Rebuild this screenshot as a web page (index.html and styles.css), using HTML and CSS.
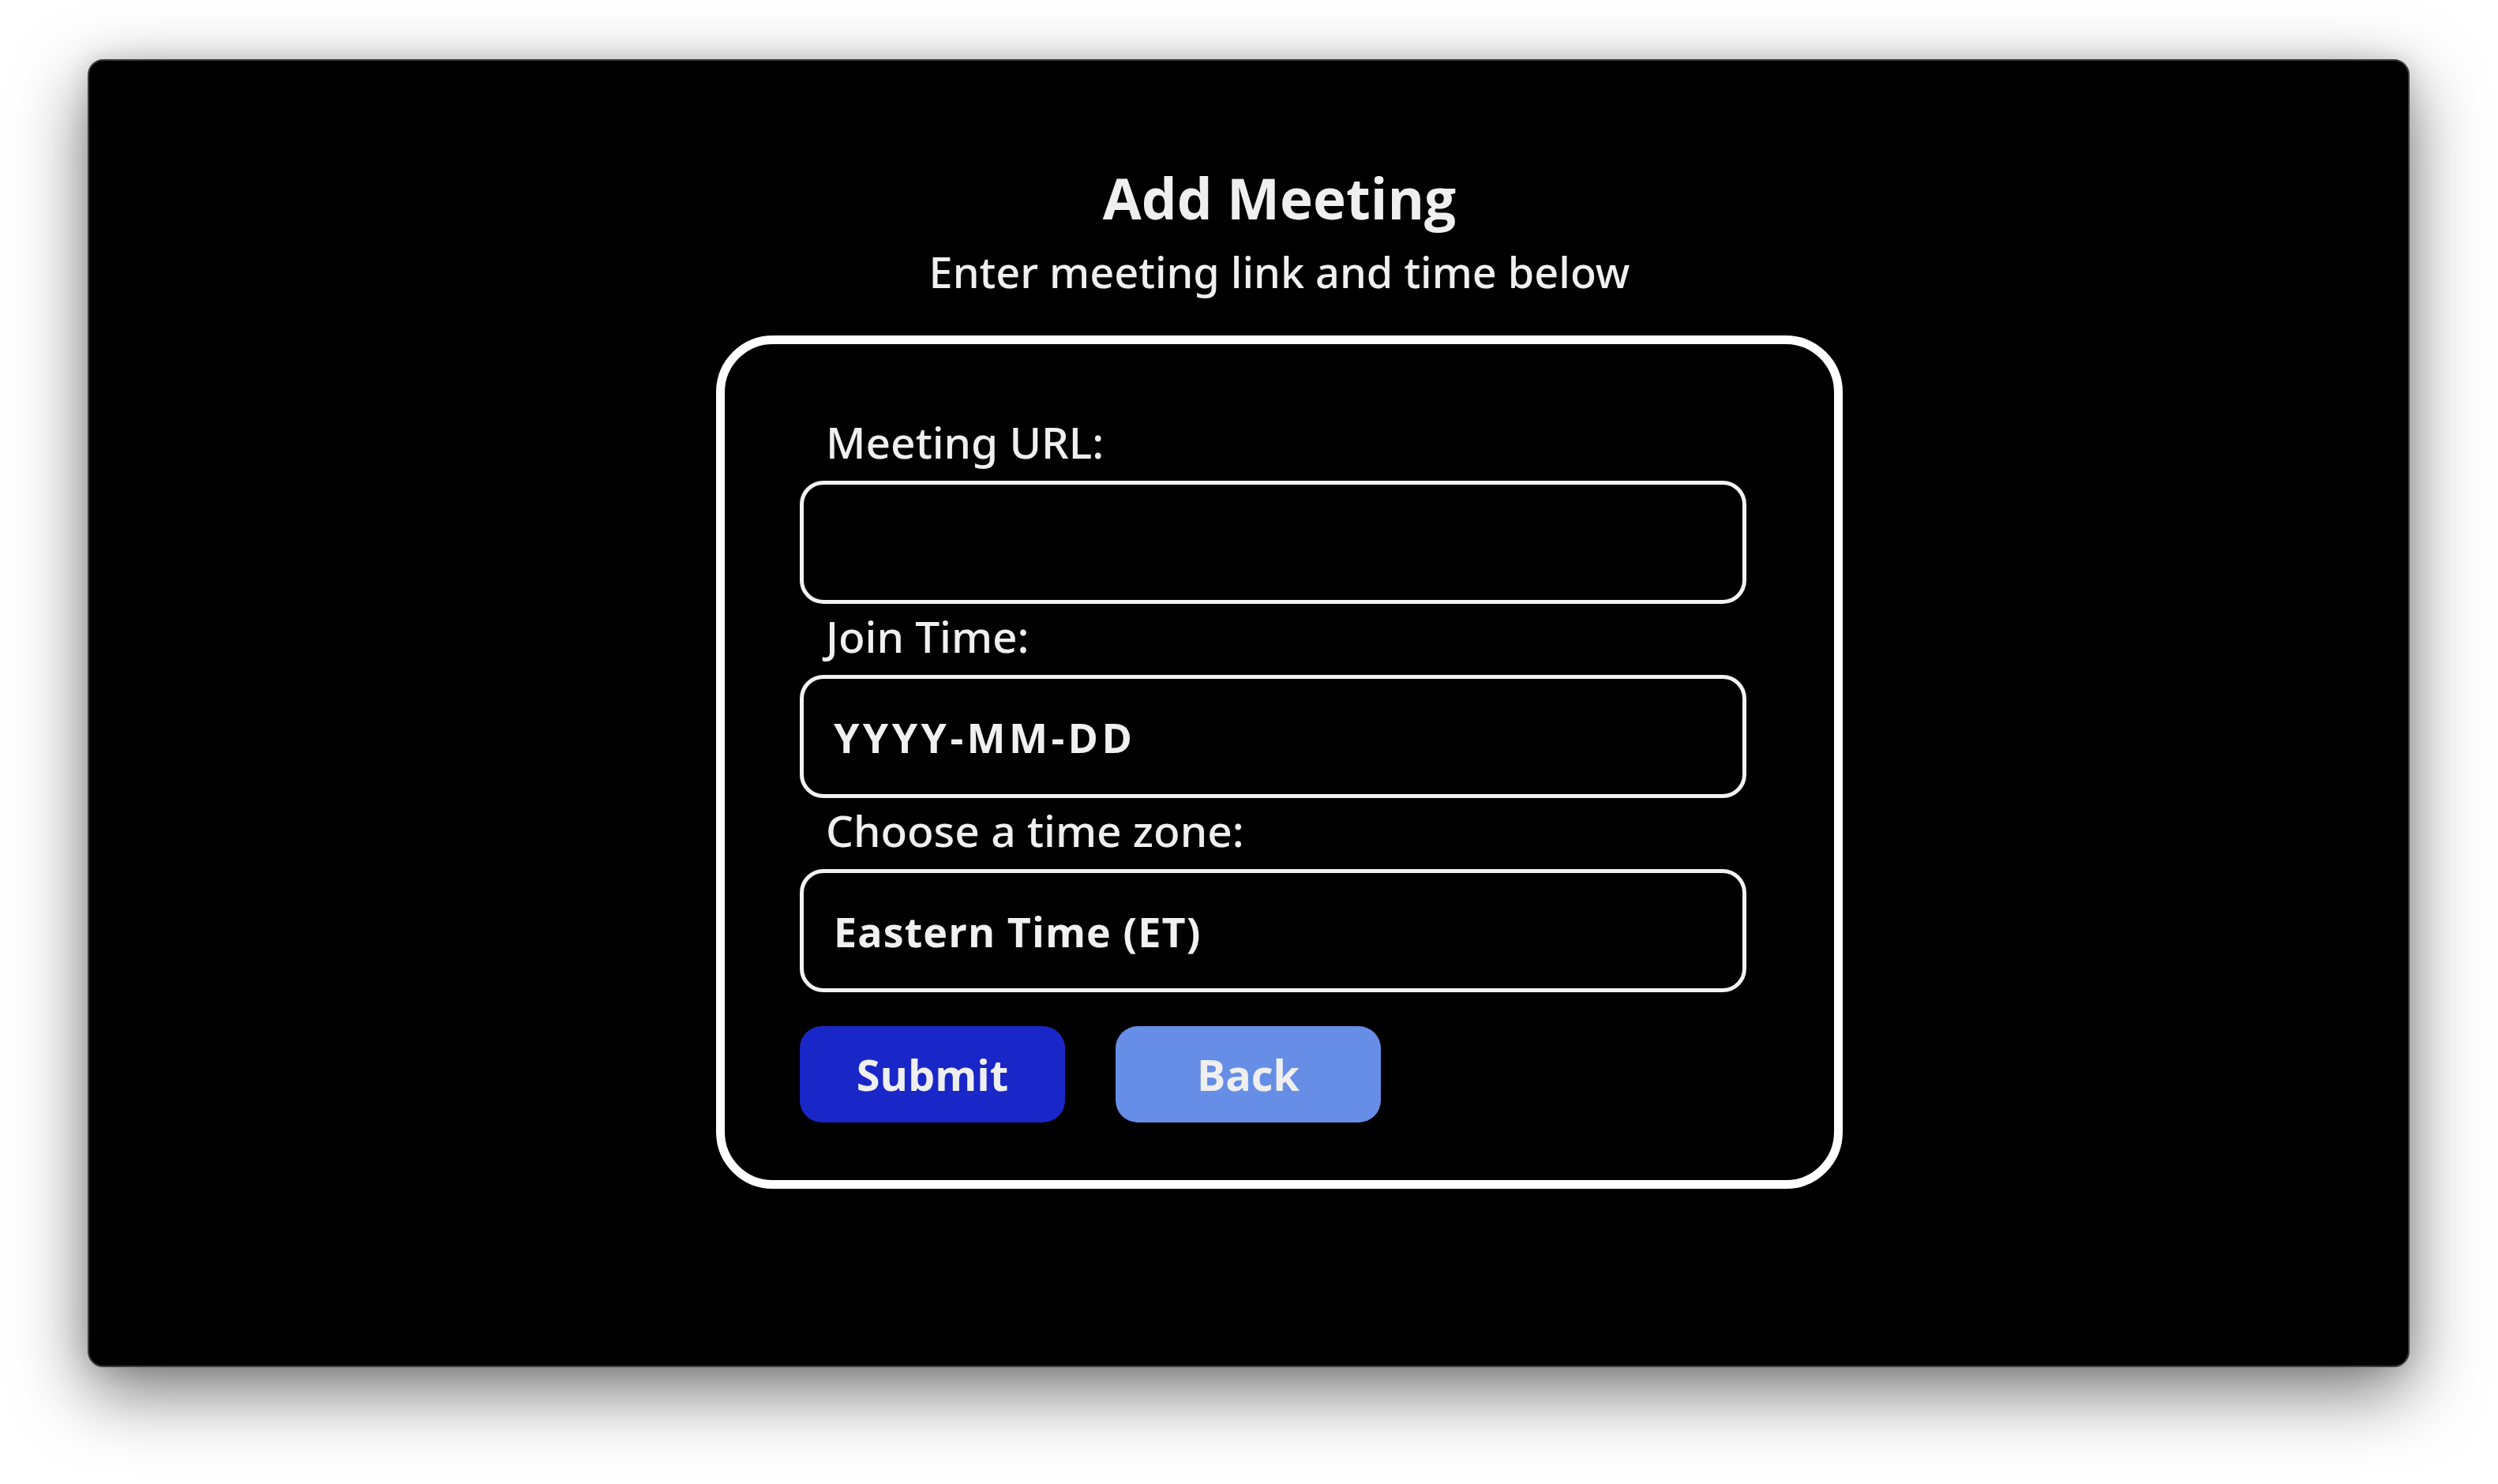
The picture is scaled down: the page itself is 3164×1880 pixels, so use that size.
FILE: index.html
```html
<!DOCTYPE html>
<html lang="en">
<head>
<meta charset="utf-8">
<title>Add Meeting</title>
<link rel="stylesheet" href="styles.css">
</head>
<body>
  <div class="window">
    <h1 class="title">Add Meeting</h1>
    <p class="subtitle">Enter meeting link and time below</p>
    <form class="card">
      <label class="label" for="url">Meeting URL:</label>
      <input class="field" id="url" type="text">
      <label class="label" for="time">Join Time:</label>
      <input class="field field-date" id="time" type="text" placeholder="YYYY-MM-DD">
      <label class="label" for="tz">Choose a time zone:</label>
      <select class="field field-select" id="tz">
        <option>Eastern Time (ET)</option>
        <option>Central Time (CT)</option>
        <option>Mountain Time (MT)</option>
        <option>Pacific Time (PT)</option>
      </select>
      <div class="actions">
        <button class="btn btn-submit" type="button">Submit</button>
        <button class="btn btn-back" type="button">Back</button>
      </div>
    </form>
  </div>
</body>
</html>
```

FILE: styles.css
```css
* {
  box-sizing: border-box;
}

html {
  height: 100%;
  margin: 0;
  background: #ffffff;
}

body {
  margin: 0;
  min-height: 100%;
  background: #ffffff;
  padding: 75px 0 0 111px;
  font-family: "Open Sans", "Noto Sans", sans-serif;
  color: #efefef;
}

.window {
  width: 2941px;
  height: 1657px;
  background: #000000;
  border: 2px solid #3c3c3c;
  border-radius: 20px;
  box-shadow: 0 30px 90px rgba(0, 0, 0, 0.55), 0 0 30px rgba(0, 0, 0, 0.12);
  display: flex;
  flex-direction: column;
  align-items: center;
  padding: 137px 0 0 78px;
}

.title {
  margin: 0;
  font-size: 71px;
  line-height: 73px;
  font-weight: 700;
  color: #efefef;
}

.subtitle {
  margin: 31px 0 0;
  font-family: "Noto Sans", "Open Sans", sans-serif;
  font-size: 54px;
  line-height: 53px;
  font-weight: 500;
  color: #efefef;
}

.card {
  margin: 54px 0 0;
  width: 1427px;
  border: 11px solid #ffffff;
  border-radius: 72px;
  padding: 97px 111px 73px 95px;
  display: flex;
  flex-direction: column;
}

.label {
  display: block;
  font-family: "Noto Sans", "Open Sans", sans-serif;
  font-size: 55px;
  line-height: 54px;
  font-weight: 500;
  padding-left: 33px;
  margin-bottom: 22px;
  color: #efefef;
}

.field {
  display: block;
  width: 100%;
  height: 156px;
  margin: 0 0 14px;
  background: #000000;
  border: 5px solid #f2f2f2;
  border-radius: 30px;
  padding: 0 0 0 38px;
  font-family: "Open Sans", "Noto Sans", sans-serif;
  font-size: 52px;
  letter-spacing: 1.1px;
  font-weight: 700;
  color: #f0f0f0;
  outline: none;
  -webkit-appearance: none;
  appearance: none;
}

.field-date,
.field-date::placeholder {
  letter-spacing: 4.4px;
}

.field::placeholder {
  color: #f0f0f0;
  opacity: 1;
}

.field-select {
  margin-bottom: 0;
}

.actions {
  display: flex;
  gap: 64px;
  margin-top: 43px;
}

.btn {
  width: 336px;
  height: 122px;
  border: none;
  border-radius: 28px;
  font-family: "Open Sans", "Noto Sans", sans-serif;
  font-size: 54px;
  font-weight: 700;
  color: #efefef;
  padding: 0;
}

.btn-submit {
  background: #1a27c8;
}

.btn-back {
  background: #678ee6;
}
```
